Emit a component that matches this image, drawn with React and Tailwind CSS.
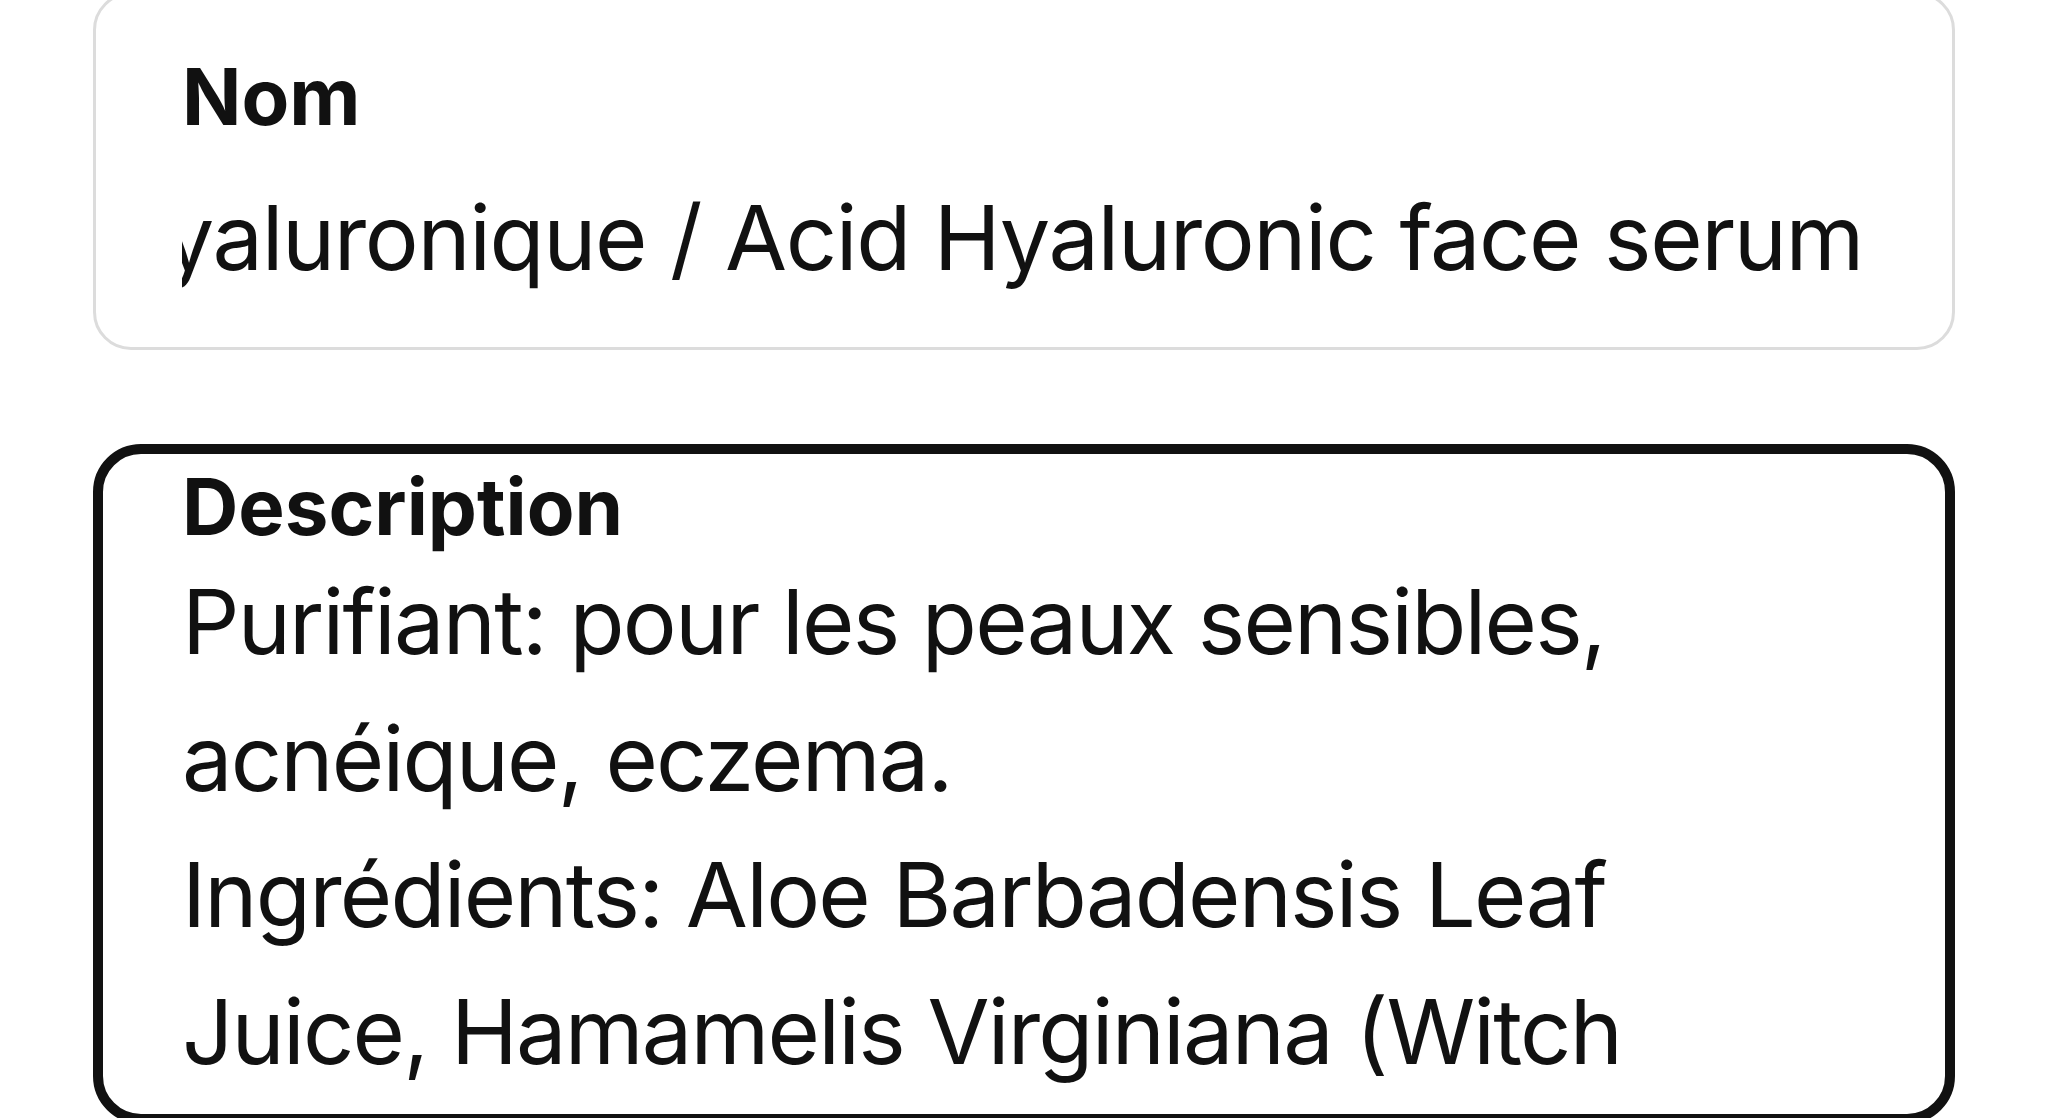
const fields = {
  name: "Sérum à l'acide hyaluronique / Acid Hyaluronic face serum",
  description:
    'Purifiant: pour les peaux sensibles, acnéique, eczema.\nIngrédients: Aloe Barbadensis Leaf Juice, Hamamelis Virginiana (Witch Hazel) Water, Glycerin, Sodium Hyaluronate.',
};

const Label = ({ children }) => (
  <div className="text-[78px] leading-[94px] font-bold text-[#111]">{children}</div>
);

export default function App() {
  return (
    <div
      className="min-h-screen overflow-hidden bg-white px-[93px]"
      style={{ fontFamily: 'Inter, "Noto Sans", sans-serif' }}
    >
      {/* name input, scrolled to the end of its value */}
      <div className="mt-[-8px] rounded-[38px] border-[3px] border-[#dcdcdc] bg-white pl-[86px] pr-[89px] pt-[55px] pb-[41px]">
        <Label>Nom</Label>
        <div className="mt-[26px] flex justify-end overflow-hidden">
          <span className="shrink-0 whitespace-nowrap text-[90px] leading-[136px] text-[#111] tracking-[-1.4px]">
            {fields.name}
          </span>
        </div>
      </div>

      {/* focused textarea */}
      <div className="mt-[94px] h-[680px] rounded-[48px] border-[10px] border-[#111] bg-white pl-[79px] pr-[85px] pt-[6px]">
        <Label>Description</Label>
        <p className="w-[1520px] whitespace-pre-line text-[90px] leading-[136.5px] text-[#111] tracking-[-1.8px]">
          {fields.description}
        </p>
      </div>
    </div>
  );
}
